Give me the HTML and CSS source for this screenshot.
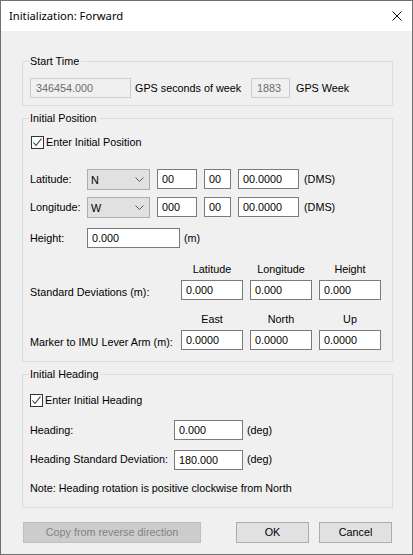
FILE: index.html
```html
<!DOCTYPE html>
<html>
<head>
<meta charset="utf-8">
<link rel="stylesheet" href="styles.css">
</head>
<body>
<div class="window">
  <div class="titlebar">
    <span class="title">Initialization: Forward</span>
    <svg class="close" width="10" height="10" viewBox="0 0 10 10"><path d="M0.5 0.5L9.5 9.5M9.5 0.5L0.5 9.5" stroke="#111" stroke-width="1" fill="none"/></svg>
  </div>
  <div class="client">
    <fieldset class="group g1">
      <legend>Start Time</legend>
      <div class="gbody g1-body">
        <div class="row h20">
          <div class="edit disabled w-sec">346454.000</div>
          <span class="lbl lbl-sec">GPS seconds of week</span>
          <div class="edit disabled w-week">1883</div>
          <span class="lbl lbl-week">GPS Week</span>
        </div>
      </div>
    </fieldset>

    <fieldset class="group g2">
      <legend>Initial Position</legend>
      <div class="gbody g2-body">
        <div class="check check-pos">
          <span class="cbox"><svg width="11" height="11" viewBox="0 0 11 11"><path d="M1.5 5.5L4 8.5L9.5 1.5" stroke="#333" stroke-width="1.1" fill="none"/></svg></span>
          <span class="ctext">Enter Initial Position</span>
        </div>
        <div class="row h21 row-lat">
          <span class="lbl lbl-coord">Latitude:</span>
          <div class="combo"><span>N</span><svg width="9" height="5" viewBox="0 0 9 5"><path d="M0.5 0.5L4.5 4.5L8.5 0.5" stroke="#555" stroke-width="1" fill="none"/></svg></div>
          <div class="edit w-deg">00</div>
          <div class="edit w-min">00</div>
          <div class="edit w-sec2">00.0000</div>
          <span class="lbl unit-dms">(DMS)</span>
        </div>
        <div class="row h21 row-lon">
          <span class="lbl lbl-coord">Longitude:</span>
          <div class="combo"><span>W</span><svg width="9" height="5" viewBox="0 0 9 5"><path d="M0.5 0.5L4.5 4.5L8.5 0.5" stroke="#555" stroke-width="1" fill="none"/></svg></div>
          <div class="edit w-deg">000</div>
          <div class="edit w-min">00</div>
          <div class="edit w-sec2">00.0000</div>
          <span class="lbl unit-dms">(DMS)</span>
        </div>
        <div class="row h20 row-height">
          <span class="lbl lbl-coord">Height:</span>
          <div class="edit w-height">0.000</div>
          <span class="lbl unit-m">(m)</span>
        </div>
        <div class="triple sd">
          <span class="hdr c1">Latitude</span>
          <span class="hdr c2">Longitude</span>
          <span class="hdr c3">Height</span>
          <span class="lbl tlabel">Standard Deviations (m):</span>
          <div class="edit c1 r2">0.000</div>
          <div class="edit c2 r2">0.000</div>
          <div class="edit c3 r2">0.000</div>
        </div>
        <div class="triple lever">
          <span class="hdr c1">East</span>
          <span class="hdr c2">North</span>
          <span class="hdr c3">Up</span>
          <span class="lbl tlabel">Marker to IMU Lever Arm (m):</span>
          <div class="edit c1 r2">0.0000</div>
          <div class="edit c2 r2">0.0000</div>
          <div class="edit c3 r2">0.0000</div>
        </div>
      </div>
    </fieldset>

    <fieldset class="group g3">
      <legend>Initial Heading</legend>
      <div class="gbody g3-body">
        <div class="check">
          <span class="cbox"><svg width="11" height="11" viewBox="0 0 11 11"><path d="M1.5 5.5L4 8.5L9.5 1.5" stroke="#333" stroke-width="1.1" fill="none"/></svg></span>
          <span class="ctext">Enter Initial Heading</span>
        </div>
        <div class="row h20 row-heading">
          <span class="lbl lbl-head">Heading:</span>
          <div class="edit w-head">0.000</div>
          <span class="lbl unit-deg">(deg)</span>
        </div>
        <div class="row h20 row-hsd">
          <span class="lbl lbl-head">Heading Standard Deviation:</span>
          <div class="edit w-head">180.000</div>
          <span class="lbl unit-deg">(deg)</span>
        </div>
        <div class="note">Note: Heading rotation is positive clockwise from North</div>
      </div>
    </fieldset>

    <div class="buttons">
      <div class="btn btn-disabled btn-copy">Copy from reverse direction</div>
      <div class="btn btn-ok">OK</div>
      <div class="btn btn-cancel">Cancel</div>
    </div>
  </div>
</div>
</body>
</html>
```

FILE: styles.css
```css
html, body {
  margin: 0;
  padding: 0;
  background: #f0f0f0;
}

body {
  font-family: "Liberation Sans", Arial, sans-serif;
  font-size: 10.8px;
  color: #000;
}

.window {
  width: 413px;
  height: 555px;
  box-sizing: border-box;
  border: 1px solid #707070;
  background: #f0f0f0;
  overflow: hidden;
}

.titlebar {
  height: 30px;
  background: #fff;
  display: flex;
  align-items: center;
  justify-content: space-between;
  padding: 0 10px 0 8px;
}

.title {
  font-family: "Noto Sans", sans-serif;
  font-size: 11.2px;
  color: #000;
  margin-top: -1px;
}

.close {
  display: block;
  margin-top: -1px;
}

.client {
  padding: 0 19px 0 21px;
}

.group {
  margin: 0;
  padding: 0;
  border: 1px solid #dcdcdc;
  min-width: 0;
}

.group legend {
  padding: 0 2px 0 1px;
  margin-left: 6px;
  height: 13px;
  line-height: 13px;
  font-size: 10.8px;
}

.g1 { margin-top: 24px; }
.g2 { margin-top: 6px; }
.g3 { margin-top: 6px; }

.gbody { padding-left: 7px; }
.g1-body { padding-top: 10px; padding-bottom: 7px; }
.g2-body { padding-top: 11px; padding-bottom: 11px; }
.g3-body { padding-top: 13px; padding-bottom: 12px; }

.row {
  display: flex;
  align-items: flex-start;
}

.h20 { height: 20px; }
.h21 { height: 21px; }

.lbl {
  display: block;
  white-space: nowrap;
}

.h20 .lbl { line-height: 21px; }
.h21 .lbl { line-height: 21px; }

.edit {
  box-sizing: border-box;
  height: 20px;
  border: 1px solid #7a7a7a;
  background: #fff;
  padding-left: 4px;
  line-height: 18px;
  white-space: nowrap;
  overflow: hidden;
}

.edit.disabled {
  border-color: #cccccc;
  background: #f0f0f0;
  color: #6d6d6d;
  padding-left: 5px;
}

.w-sec { width: 101px; }
.lbl-sec { width: 120px; padding-left: 4px; box-sizing: border-box; }
.w-week { width: 39px; }
.lbl-week { margin-left: 6px; }

.check {
  display: flex;
  align-items: center;
  height: 13px;
}

.check-pos { margin-left: 1px; }

.cbox {
  box-sizing: border-box;
  width: 13px;
  height: 13px;
  border: 1px solid #333;
  background: #fff;
  display: flex;
  align-items: center;
  justify-content: center;
}

.cbox svg { display: block; }

.ctext {
  margin-left: 2px;
  line-height: 13px;
}

.row-lat { margin-top: 20px; }
.row-lon { margin-top: 7px; }
.row-height { margin-top: 10px; }

.lbl-coord { width: 57px; }

.combo {
  box-sizing: border-box;
  width: 63px;
  height: 21px;
  border: 1px solid #adadad;
  background: #e1e1e1;
  display: flex;
  align-items: center;
  justify-content: space-between;
  padding: 0 5px 0 3px;
  margin-right: 7px;
}

.combo span { line-height: 19px; padding-top: 1px; }
.combo svg { display: block; }

.w-deg { width: 40px; margin-right: 7px; }
.w-min { width: 27px; margin-right: 7px; }
.w-sec2 { width: 61px; }
.unit-dms { margin-left: 5px; }

.w-height { width: 93px; }
.unit-m { margin-left: 4px; }

.triple {
  display: grid;
  grid-template-columns: 144px 62px 62px 62px;
  grid-template-rows: 13px 20px;
  column-gap: 7px;
  row-gap: 4px;
}

.triple .hdr {
  grid-row: 1;
  line-height: 13px;
  text-align: center;
  white-space: nowrap;
}

.triple .c1 { grid-column: 2; }
.triple .c2 { grid-column: 3; }
.triple .c3 { grid-column: 4; }
.triple .r2 { grid-row: 2; }

.tlabel {
  grid-column: 1;
  grid-row: 2;
  line-height: 24px;
}

.sd { margin-top: 15px; }
.lever { margin-top: 13px; }

.row-heading { margin-top: 13px; }
.row-hsd { margin-top: 10px; }
.row-hsd .lbl { line-height: 18px; }
.lbl-head { width: 144px; }
.w-head { width: 69px; }
.unit-deg { margin-left: 4px; }

.note {
  margin-top: 12px;
  line-height: 13px;
  white-space: nowrap;
}

.buttons {
  display: flex;
  margin-top: 14px;
  padding-left: 1px;
}

.btn {
  box-sizing: border-box;
  height: 21px;
  border: 1px solid #adadad;
  background: #e1e1e1;
  text-align: center;
  line-height: 19px;
  white-space: nowrap;
}

.btn-disabled {
  border-color: #bfbfbf;
  background: #cccccc;
  color: #838383;
}

.btn-copy { width: 178px; }
.btn-ok { width: 73px; margin-left: 35px; }
.btn-cancel { width: 73px; margin-left: 10px; }
```
